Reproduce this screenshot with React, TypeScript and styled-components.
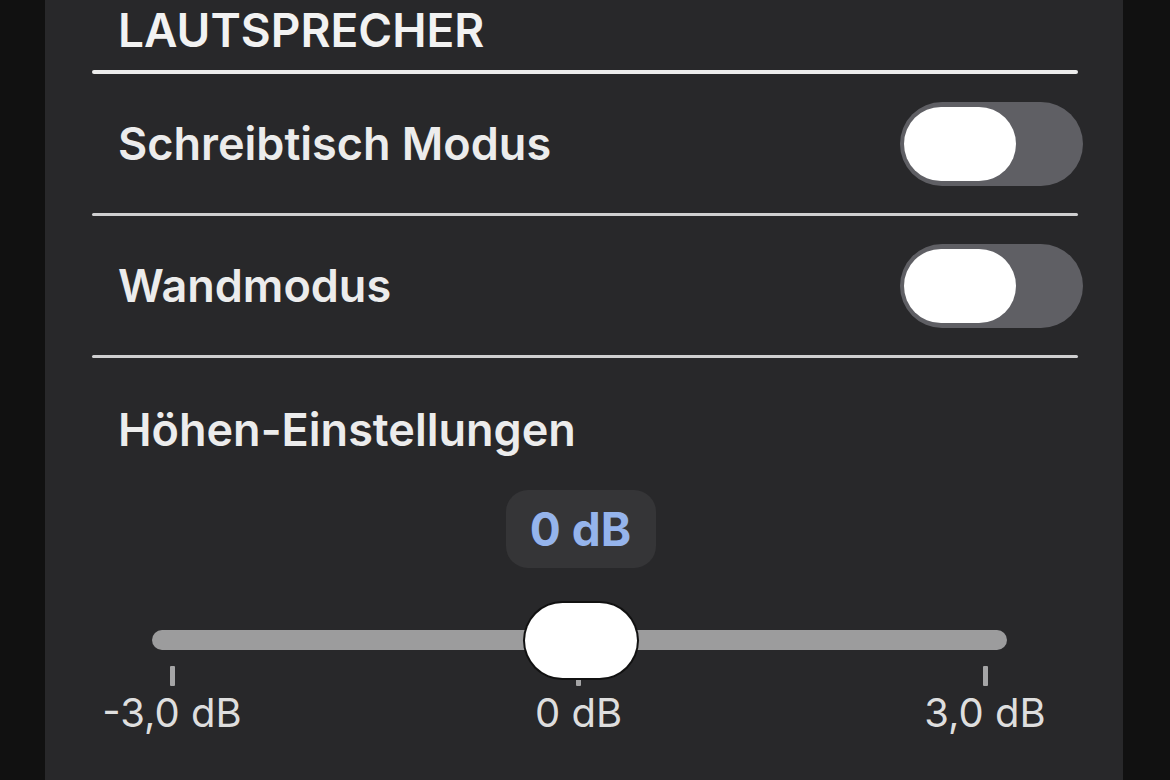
import styled, { createGlobalStyle } from "styled-components";

const Global = createGlobalStyle`
  html, body {
    margin: 0;
    padding: 0;
    background: #111111;
  }
  body {
    font-family: Inter, "Liberation Sans", sans-serif;
    -webkit-font-smoothing: antialiased;
  }
`;

const Screen = styled.div`
  width: 1170px;
  height: 780px;
  background: #111111;
  display: flex;
  justify-content: flex-start;
  overflow: hidden;
`;

const Panel = styled.div`
  margin-left: 45px;
  width: 1078px;
  height: 780px;
  background: #28282a;
  display: flex;
  flex-direction: column;
`;

const Header = styled.div`
  height: 70px;
  padding-left: 73px;
  display: flex;
  align-items: flex-end;
  box-sizing: border-box;
  padding-bottom: 17px;
  font-size: 46px;
  font-weight: 600;
  color: #f2f2f2;
  line-height: 1;
`;

const Divider = styled.div<{ $strong?: boolean }>`
  margin: 0 45px 0 47px;
  height: ${(p) => (p.$strong ? "4px" : "3px")};
  border-radius: 2px;
  background: ${(p) => (p.$strong ? "#ececec" : "#cfcfd0")};
`;

const Row = styled.div`
  height: 139px;
  display: flex;
  align-items: center;
  justify-content: space-between;
  padding: 0 40px 0 73px;
`;

const Label = styled.span`
  font-size: 45px;
  font-weight: 600;
  color: #ececec;
`;

const Toggle = styled.div`
  width: 183px;
  height: 84px;
  border-radius: 42px;
  background: #5f5f64;
  box-sizing: border-box;
  padding: 4px;
  display: flex;
  align-items: center;
`;

const Knob = styled.div`
  width: 112px;
  height: 74px;
  border-radius: 37px;
  background: #ffffff;
`;

const Section = styled.div`
  padding: 44px 0 0 73px;
  height: 88px;
`;

const SliderArea = styled.div`
  margin-left: 107px;
  width: 855px;
  display: flex;
  flex-direction: column;
  align-items: center;
`;

const Bubble = styled.div`
  margin-left: 2px;
  width: 150px;
  height: 78px;
  border-radius: 22px;
  background: #353537;
  display: flex;
  align-items: center;
  justify-content: center;
  font-size: 46px;
  font-weight: 700;
  color: #95b4ec;
`;

const TrackWrap = styled.div`
  position: relative;
  margin-top: 62px;
  width: 100%;
  height: 20px;
`;

const Track = styled.div`
  width: 100%;
  height: 20px;
  border-radius: 10px;
  background: #9c9c9d;
`;

const Thumb = styled.div`
  position: absolute;
  left: 373px;
  top: -27px;
  width: 112px;
  height: 75px;
  border-radius: 38px;
  background: #ffffff;
  box-shadow: 0 0 0 2px #111111;
`;

const Marks = styled.div`
  width: 100%;
  box-sizing: border-box;
  padding: 0 22px 0 20px;
  margin-top: 16px;
  display: flex;
  justify-content: space-between;
`;

const Mark = styled.div`
  width: 0;
  display: flex;
  flex-direction: column;
  align-items: center;
`;

const Tick = styled.div`
  width: 5px;
  height: 20px;
  border-radius: 1px;
  background: #a5a5a6;
`;

const MarkText = styled.span`
  margin-top: 2px;
  white-space: nowrap;
  font-size: 40px;
  font-weight: 400;
  color: #dedede;
`;

const marks = ["-3,0 dB", "0 dB", "3,0 dB"];

export default function App() {
  return (
    <Screen>
      <Global />
      <Panel>
        <Header>LAUTSPRECHER</Header>
        <Divider $strong />
        <Row>
          <Label>Schreibtisch Modus</Label>
          <Toggle>
            <Knob />
          </Toggle>
        </Row>
        <Divider />
        <Row>
          <Label>Wandmodus</Label>
          <Toggle>
            <Knob />
          </Toggle>
        </Row>
        <Divider />
        <Section>
          <Label>Höhen-Einstellungen</Label>
        </Section>
        <SliderArea>
          <Bubble>0 dB</Bubble>
          <TrackWrap>
            <Track />
            <Thumb />
          </TrackWrap>
          <Marks>
            {marks.map((m) => (
              <Mark key={m}>
                <Tick />
                <MarkText>{m}</MarkText>
              </Mark>
            ))}
          </Marks>
        </SliderArea>
      </Panel>
    </Screen>
  );
}
